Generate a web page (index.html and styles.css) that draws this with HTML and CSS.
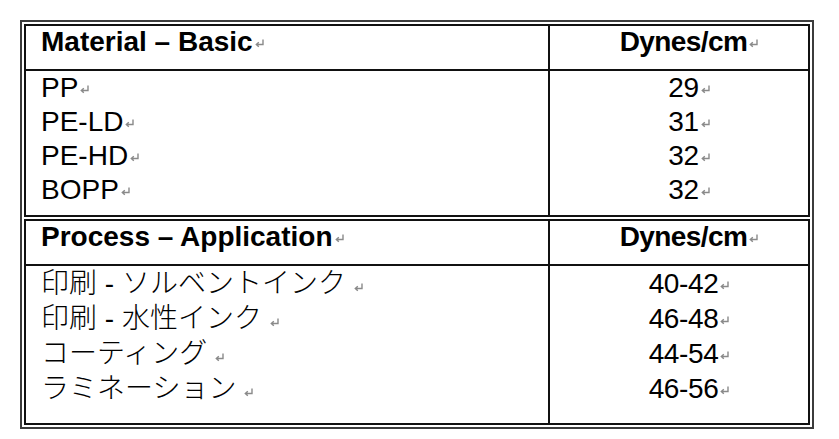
FILE: index.html
```html
<!DOCTYPE html>
<html lang="en">
<head>
<meta charset="utf-8">
<title>Dynes/cm table</title>
<link rel="stylesheet" href="styles.css">
</head>
<body>
<div class="frame">
  <div class="sec sec1">
    <div class="cell name head">Material – Basic<svg class="pm" viewBox="0 0 9 9"><path d="M8 0.5V5.5H1.5M3.8 3.2L1.3 5.5L3.8 7.8"/></svg></div>
    <div class="cell val head">Dynes/cm<svg class="pm" viewBox="0 0 9 9"><path d="M8 0.5V5.5H1.5M3.8 3.2L1.3 5.5L3.8 7.8"/></svg></div>
    <div class="cell name body">
      <div class="line">PP<svg class="pm" viewBox="0 0 9 9"><path d="M8 0.5V5.5H1.5M3.8 3.2L1.3 5.5L3.8 7.8"/></svg></div>
      <div class="line">PE-LD<svg class="pm" viewBox="0 0 9 9"><path d="M8 0.5V5.5H1.5M3.8 3.2L1.3 5.5L3.8 7.8"/></svg></div>
      <div class="line">PE-HD<svg class="pm" viewBox="0 0 9 9"><path d="M8 0.5V5.5H1.5M3.8 3.2L1.3 5.5L3.8 7.8"/></svg></div>
      <div class="line">BOPP<svg class="pm" viewBox="0 0 9 9"><path d="M8 0.5V5.5H1.5M3.8 3.2L1.3 5.5L3.8 7.8"/></svg></div>
    </div>
    <div class="cell val body">
      <div class="line">29<svg class="pm" viewBox="0 0 9 9"><path d="M8 0.5V5.5H1.5M3.8 3.2L1.3 5.5L3.8 7.8"/></svg></div>
      <div class="line">31<svg class="pm" viewBox="0 0 9 9"><path d="M8 0.5V5.5H1.5M3.8 3.2L1.3 5.5L3.8 7.8"/></svg></div>
      <div class="line">32<svg class="pm" viewBox="0 0 9 9"><path d="M8 0.5V5.5H1.5M3.8 3.2L1.3 5.5L3.8 7.8"/></svg></div>
      <div class="line">32<svg class="pm" viewBox="0 0 9 9"><path d="M8 0.5V5.5H1.5M3.8 3.2L1.3 5.5L3.8 7.8"/></svg></div>
    </div>
  </div>
  <div class="sec sec2">
    <div class="cell name head">Process – Application<svg class="pm" viewBox="0 0 9 9"><path d="M8 0.5V5.5H1.5M3.8 3.2L1.3 5.5L3.8 7.8"/></svg></div>
    <div class="cell val head">Dynes/cm<svg class="pm" viewBox="0 0 9 9"><path d="M8 0.5V5.5H1.5M3.8 3.2L1.3 5.5L3.8 7.8"/></svg></div>
    <div class="cell name body jpbody" lang="ja">
      <div class="line jpline">印刷 - ソルベントインク<svg class="pm far" viewBox="0 0 9 9"><path d="M8 0.5V5.5H1.5M3.8 3.2L1.3 5.5L3.8 7.8"/></svg></div>
      <div class="line jpline">印刷 - 水性インク<svg class="pm far" viewBox="0 0 9 9"><path d="M8 0.5V5.5H1.5M3.8 3.2L1.3 5.5L3.8 7.8"/></svg></div>
      <div class="line jpline">コーティング<svg class="pm far" viewBox="0 0 9 9"><path d="M8 0.5V5.5H1.5M3.8 3.2L1.3 5.5L3.8 7.8"/></svg></div>
      <div class="line jpline">ラミネーション<svg class="pm far" viewBox="0 0 9 9"><path d="M8 0.5V5.5H1.5M3.8 3.2L1.3 5.5L3.8 7.8"/></svg></div>
    </div>
    <div class="cell val body jpbody">
      <div class="line">40-42<svg class="pm" viewBox="0 0 9 9"><path d="M8 0.5V5.5H1.5M3.8 3.2L1.3 5.5L3.8 7.8"/></svg></div>
      <div class="line">46-48<svg class="pm" viewBox="0 0 9 9"><path d="M8 0.5V5.5H1.5M3.8 3.2L1.3 5.5L3.8 7.8"/></svg></div>
      <div class="line">44-54<svg class="pm" viewBox="0 0 9 9"><path d="M8 0.5V5.5H1.5M3.8 3.2L1.3 5.5L3.8 7.8"/></svg></div>
      <div class="line">46-56<svg class="pm" viewBox="0 0 9 9"><path d="M8 0.5V5.5H1.5M3.8 3.2L1.3 5.5L3.8 7.8"/></svg></div>
    </div>
  </div>
</div>
</body>
</html>
```

FILE: styles.css
```css
html, body {
  margin: 0;
  padding: 0;
  background: #ffffff;
}

body {
  font-family: "Liberation Sans", Arial, "Noto Sans CJK JP", sans-serif;
  font-size: 28px;
  color: #000;
}

.frame {
  margin: 20px 0 0 20px;
  width: 794px;
  box-sizing: border-box;
  border: 2px solid #3c3c3c;
  padding: 2px;
  display: flex;
  flex-direction: column;
  gap: 2px;
}

.sec {
  display: grid;
  grid-template-columns: 524px 258px;
  border: 2px solid #111;
}

.cell {
  box-sizing: border-box;
}

.name {
  border-right: 2px solid #111;
  padding-left: 15px;
}

.val {
  text-align: center;
  padding-left: 20px;
  letter-spacing: -0.4px;
}

.head {
  height: 45px;
  border-bottom: 2px solid #111;
  font-weight: bold;
  line-height: 32px;
}

.val.head {
  letter-spacing: -0.6px;
}

.sec1 .body {
  height: 144px;
  line-height: 34px;
}

.sec2 .body {
  height: 157px;
  line-height: 35px;
}

.jpline {
  line-height: 35px;
  font-weight: 300;
}

.pm {
  width: 9px;
  height: 9px;
  margin-left: 2px;
  vertical-align: 3px;
  fill: none;
  stroke: #8a8a8a;
  stroke-width: 1.4;
  letter-spacing: 0;
}

.pm.far {
  margin-left: 8px;
  vertical-align: 1px;
}
```
